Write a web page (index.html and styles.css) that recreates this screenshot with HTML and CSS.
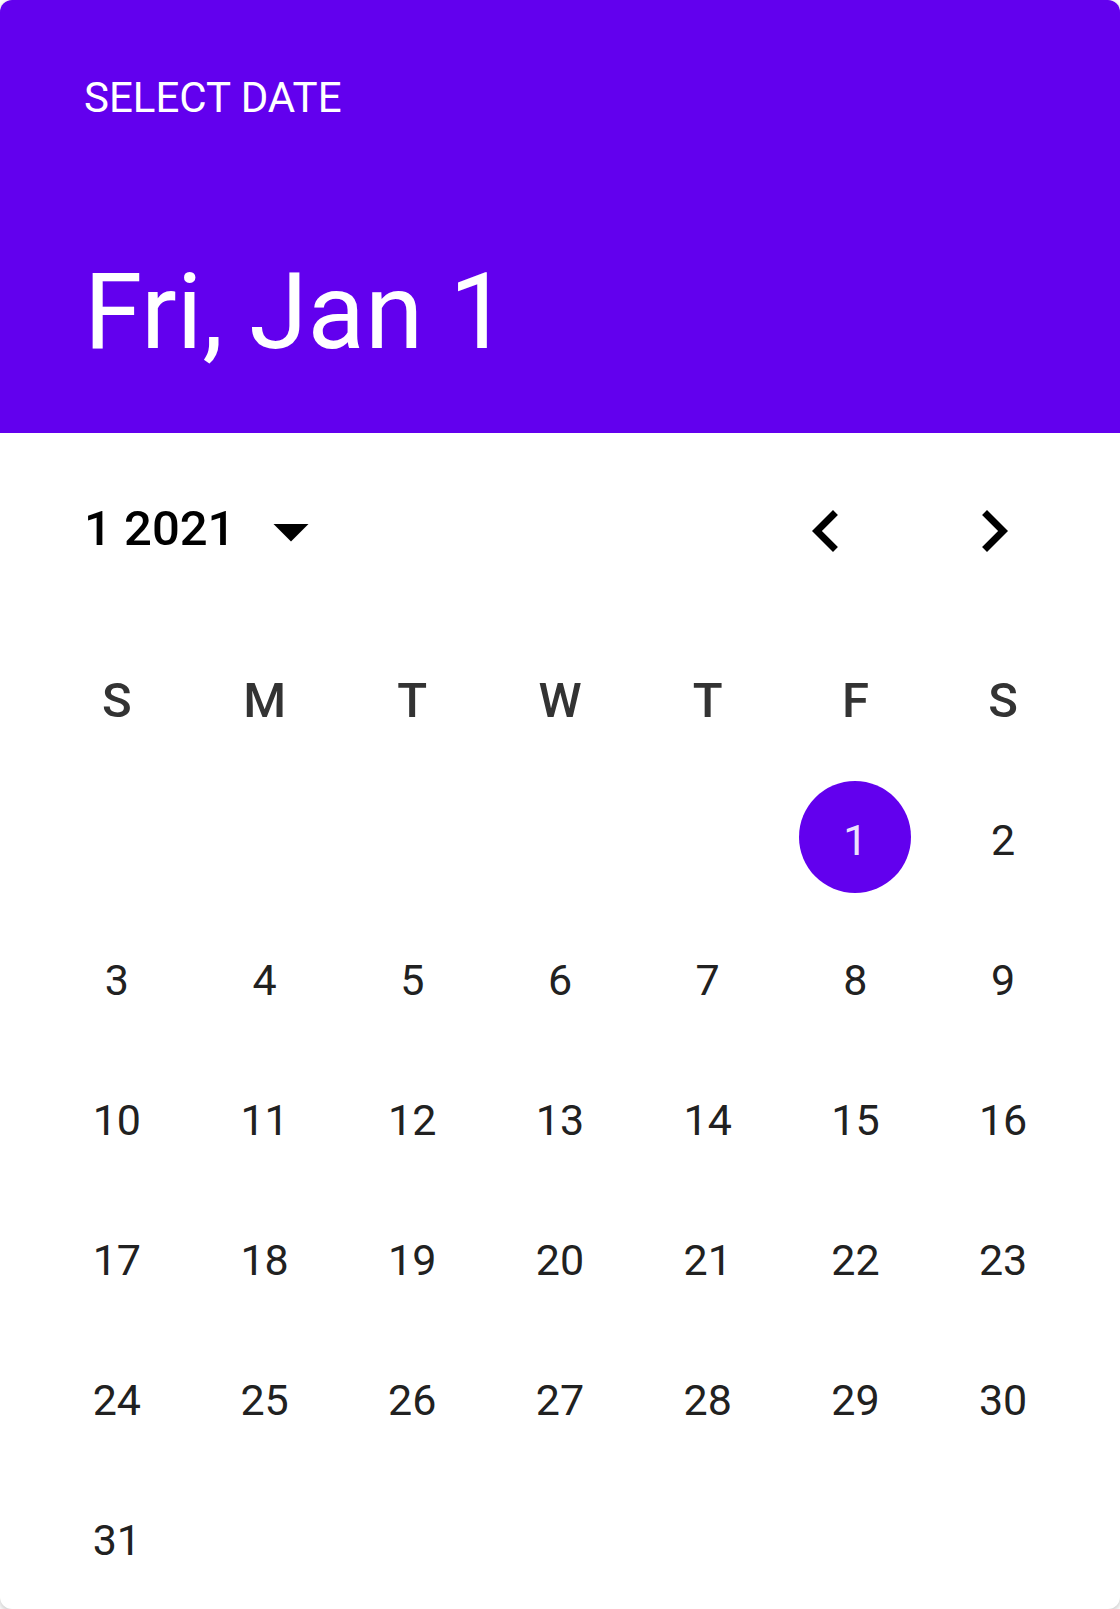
FILE: index.html
```html
<!DOCTYPE html>
<html lang="en">
<head>
<meta charset="utf-8">
<title>Select date</title>
<link rel="stylesheet" href="styles.css">
</head>
<body>
<div class="picker">
  <header class="header">
    <div class="overline">SELECT DATE</div>
    <div class="headline">Fri, Jan 1</div>
  </header>
  <div class="toolbar">
    <div class="month-year">1 2021</div>
    <svg class="drop" viewBox="0 0 24 24" width="84" height="84"><path d="M7 10l5 5 5-5z"/></svg>
    <div class="spacer"></div>
    <button class="nav" aria-label="Previous month"><svg viewBox="0 0 24 24" width="84" height="84"><path d="M15.41 7.41L14 6l-6 6 6 6 1.41-1.41L10.83 12z"/></svg></button>
    <button class="nav" aria-label="Next month"><svg viewBox="0 0 24 24" width="84" height="84"><path d="M10 6L8.59 7.41 13.17 12l-4.58 4.59L10 18l6-6z"/></svg></button>
  </div>
  <div class="weekdays">
    <div>S</div><div>M</div><div>T</div><div>W</div><div>T</div><div>F</div><div>S</div>
  </div>
  <div class="days">
    <div></div><div></div><div></div><div></div><div></div>
    <div class="day"><span class="sel">1</span></div><div class="day">2</div>
    <div class="day">3</div><div class="day">4</div><div class="day">5</div><div class="day">6</div><div class="day">7</div><div class="day">8</div><div class="day">9</div>
    <div class="day">10</div><div class="day">11</div><div class="day">12</div><div class="day">13</div><div class="day">14</div><div class="day">15</div><div class="day">16</div>
    <div class="day">17</div><div class="day">18</div><div class="day">19</div><div class="day">20</div><div class="day">21</div><div class="day">22</div><div class="day">23</div>
    <div class="day">24</div><div class="day">25</div><div class="day">26</div><div class="day">27</div><div class="day">28</div><div class="day">29</div><div class="day">30</div>
    <div class="day">31</div>
  </div>
</div>
</body>
</html>
```

FILE: styles.css
```css
html, body {
  margin: 0;
  padding: 0;
  background: #ffffff;
}
body {
  font-family: Roboto, "Noto Sans", Arial, sans-serif;
}
.picker {
  width: 1120px;
  height: 1609px;
  background: #ffffff;
  border-radius: 12px;
  overflow: hidden;
  box-shadow: 0 2px 6px rgba(0, 0, 0, 0.25);
}
.header {
  background: #6200ee;
  height: 433px;
  box-sizing: border-box;
  padding: 73px 84px 0;
  display: flex;
  flex-direction: column;
  color: #ffffff;
}
.overline {
  font-size: 42px;
  line-height: 49px;
}
.headline {
  font-size: 105.5px;
  line-height: 125px;
  margin-top: 128px;
}
.toolbar {
  margin-top: 14px;
  height: 168px;
  padding: 0 42px 0 84px;
  display: flex;
  align-items: center;
}
.month-year {
  font-size: 49px;
  font-weight: 500;
  color: #000000;
  margin-bottom: 6px;
}
.drop {
  margin-left: 14px;
  fill: #000000;
}
.spacer {
  flex: 1;
}
.nav {
  width: 168px;
  height: 168px;
  border: 0;
  padding: 0;
  background: transparent;
  display: flex;
  align-items: center;
  justify-content: center;
  fill: #000000;
}
.weekdays, .days {
  display: grid;
  grid-template-columns: repeat(7, 1fr);
  grid-auto-rows: 140px;
  padding: 0 43px;
}
.weekdays {
  margin-top: 15px;
}
.weekdays div {
  display: flex;
  align-items: center;
  justify-content: center;
  font-size: 49px;
  font-weight: 500;
  color: #333333;
}
.day {
  display: flex;
  align-items: center;
  justify-content: center;
  font-size: 43px;
  color: #212121;
}
.sel {
  width: 112px;
  height: 112px;
  box-sizing: border-box;
  padding-top: 7px;
  margin-bottom: 7px;
  border-radius: 50%;
  background: #6200ee;
  color: #ebe0fd;
  display: flex;
  align-items: center;
  justify-content: center;
}
```
